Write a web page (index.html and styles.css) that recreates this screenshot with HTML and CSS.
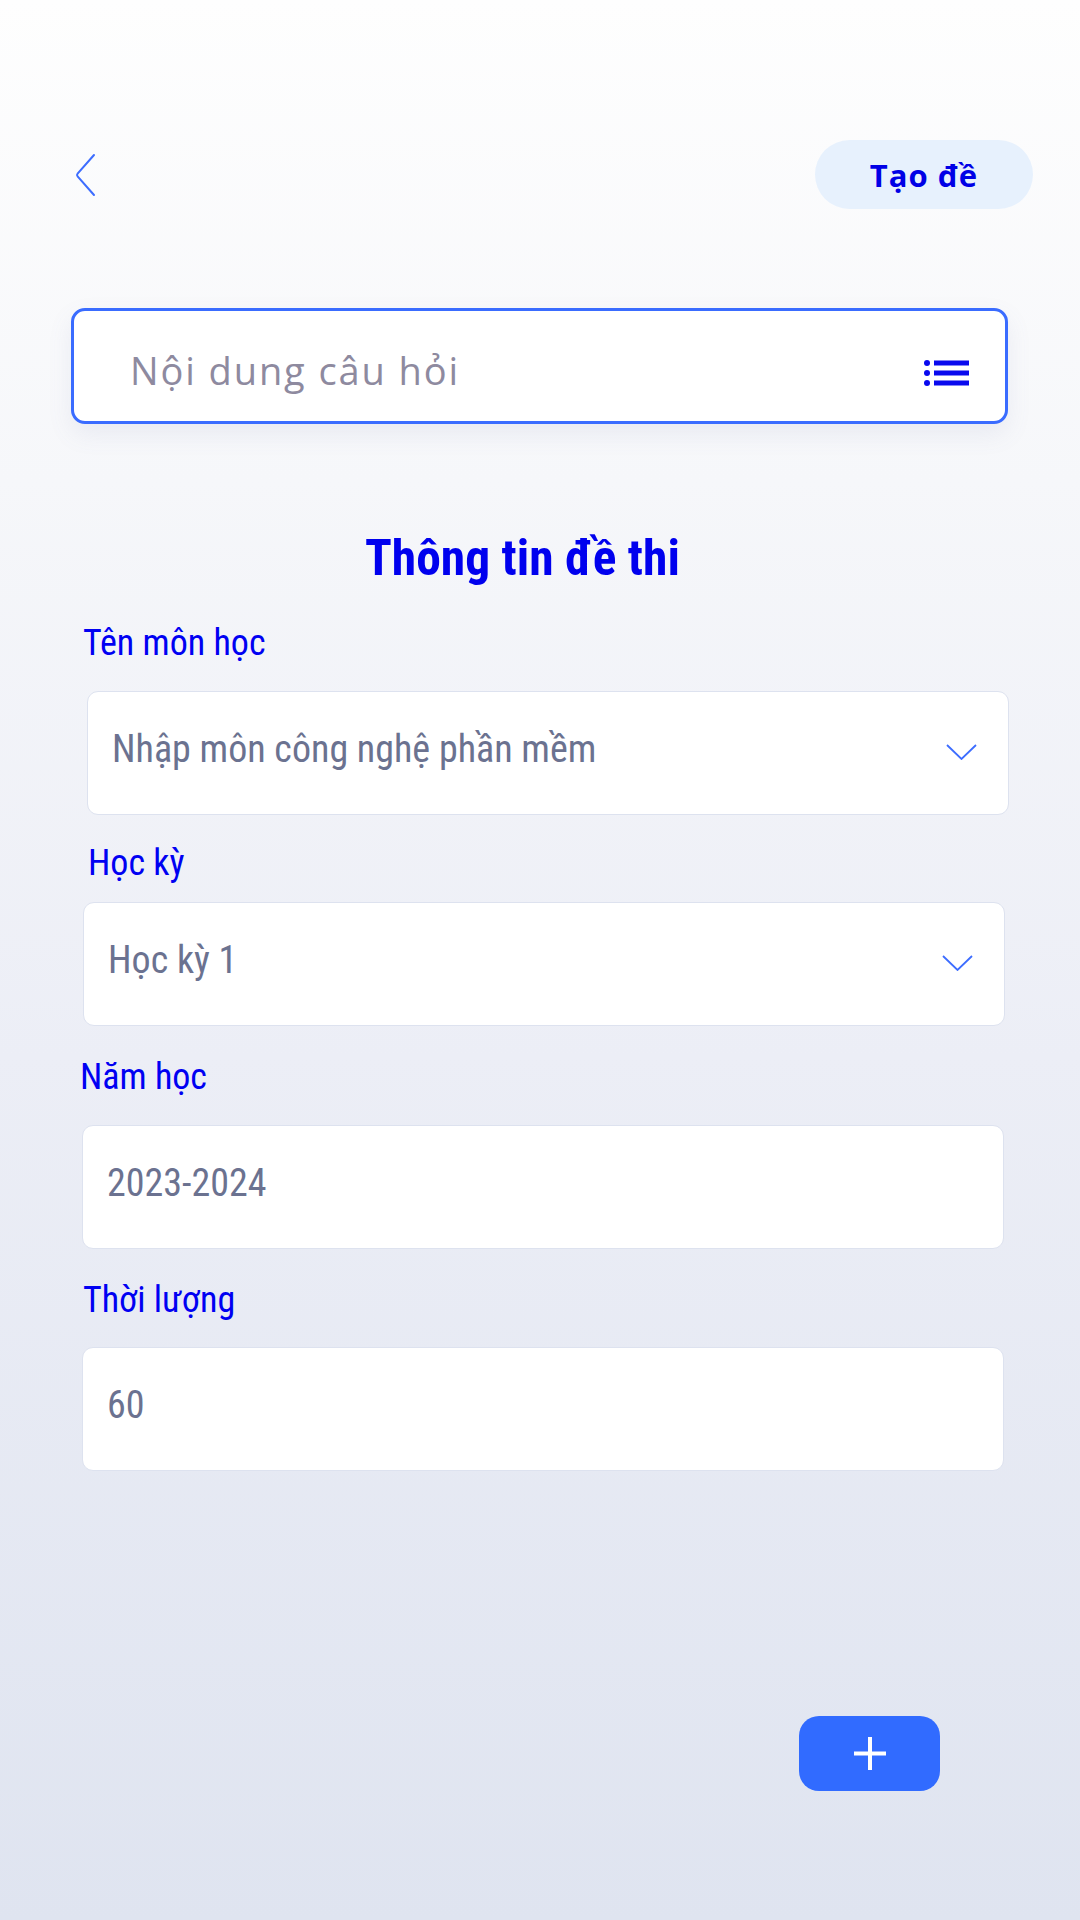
FILE: index.html
```html
<!DOCTYPE html>
<html lang="vi">
<head>
<meta charset="utf-8">
<title>Tạo đề</title>
<link rel="stylesheet" href="styles.css">
</head>
<body>
<div class="page">
  <header class="topbar">
    <button class="back" aria-label="Quay lại">
      <svg width="22" height="44" viewBox="0 0 22 44"><path d="M20 2 L3.6 20.6 Q2.4 22 3.6 23.4 L20 42" fill="none" stroke="#3d6dff" stroke-width="2" stroke-linecap="round" stroke-linejoin="round"/></svg>
    </button>
    <button class="create-btn">Tạo đề</button>
  </header>

  <div class="search">
    <span class="search-placeholder">Nội dung câu hỏi</span>
    <svg class="list-icon" width="46" height="26" viewBox="0 0 46 26">
      <circle cx="3" cy="3" r="3" fill="#0a0aee"/>
      <circle cx="3" cy="13" r="3" fill="#0a0aee"/>
      <circle cx="3" cy="23" r="3" fill="#0a0aee"/>
      <rect x="10" y="0.5" width="35" height="5" fill="#0a0aee"/>
      <rect x="10" y="10.5" width="35" height="5" fill="#0a0aee"/>
      <rect x="10" y="20.5" width="35" height="5" fill="#0a0aee"/>
    </svg>
  </div>

  <h1 class="title">Thông tin đề thi</h1>

  <div class="form">
    <div class="label label-1">Tên môn học</div>
    <div class="field field-1">
      <span class="value">Nhập môn công nghệ phần mềm</span>
      <svg class="caret" width="31" height="16" viewBox="0 0 31 16"><path d="M1 1 L15.5 15 L30 1" fill="none" stroke="#3d6dff" stroke-width="1.8"/></svg>
    </div>

    <div class="label label-2">Học kỳ</div>
    <div class="field field-2">
      <span class="value">Học kỳ 1</span>
      <svg class="caret" width="31" height="16" viewBox="0 0 31 16"><path d="M1 1 L15.5 15 L30 1" fill="none" stroke="#3d6dff" stroke-width="1.8"/></svg>
    </div>

    <div class="label label-3">Năm học</div>
    <div class="field field-3">
      <span class="value">2023-2024</span>
    </div>

    <div class="label label-4">Thời lượng</div>
    <div class="field field-4">
      <span class="value">60</span>
    </div>
  </div>

  <button class="fab" aria-label="Thêm">
    <svg width="32" height="33" viewBox="0 0 32 33"><path d="M16 0 V33 M0 16.5 H32" stroke="#ffffff" stroke-width="4"/></svg>
  </button>
</div>
</body>
</html>
```
FILE: styles.css
```css
html, body {
  margin: 0;
  padding: 0;
}

body {
  width: 1080px;
  min-height: 1920px;
  background: linear-gradient(180deg, #fefefe 0%, #f6f7fa 25%, #eceef6 55%, #dfe4f0 100%);
  font-family: "Roboto Condensed", Roboto, sans-serif;
  font-stretch: condensed;
}

.page {
  padding-top: 140px;
}

button {
  border: 0;
  padding: 0;
  background: none;
  cursor: pointer;
}

.topbar {
  display: flex;
  justify-content: space-between;
  align-items: center;
  height: 69px;
  padding: 0 47px 0 74px;
}

.back {
  display: flex;
  width: 22px;
  height: 44px;
}

.create-btn {
  width: 218px;
  height: 69px;
  border-radius: 35px;
  background: #e7f1fd;
  color: #0000e6;
  font-family: "Open Sans", sans-serif;
  font-stretch: normal;
  font-weight: 700;
  font-size: 31px;
  letter-spacing: 1px;
  display: flex;
  align-items: center;
  justify-content: center;
}

.search {
  box-sizing: border-box;
  margin: 99px 0 0 71px;
  width: 937px;
  height: 116px;
  border: 3px solid #3a6cff;
  border-radius: 14px;
  background: #ffffff;
  box-shadow: 0 10px 24px rgba(110, 120, 170, 0.10);
  display: flex;
  align-items: center;
  justify-content: space-between;
  padding: 8px 35px 0 56px;
}

.search-placeholder {
  font-family: "Open Sans", sans-serif;
  font-stretch: normal;
  font-size: 38px;
  letter-spacing: 1.9px;
  color: #8e8a9f;
}

.list-icon {
  margin-top: 6px;
}

.title {
  margin: 104px 0 0;
  padding-left: 365px;
  font-size: 49.5px;
  line-height: 60px;
  font-weight: 700;
  color: #0000ee;
}

.label {
  font-size: 36px;
  line-height: 44px;
  color: #0000f2;
  margin-left: 83px;
}

.label-1 { margin-top: 33px; }
.label-2 { margin-top: 26px; margin-left: 88px; }
.label-3 { margin-top: 29px; margin-left: 80px; }
.label-4 { margin-top: 29px; }

.field {
  box-sizing: border-box;
  width: 922px;
  height: 124px;
  margin-left: 82px;
  margin-top: 26px;
  background: #ffffff;
  border: 1px solid #dde2ef;
  border-radius: 11px;
  display: flex;
  align-items: center;
  justify-content: space-between;
  padding: 0 31px 8px 24px;
}

.field-1 { margin-left: 87px; }
.field-2 { margin-left: 83px; margin-top: 17px; }
.field-4 { margin-top: 25px; }

.value {
  font-size: 38px;
  color: #6b7290;
}

.caret {
  margin-top: 6px;
}

.fab {
  margin: 245px 0 0 799px;
  width: 141px;
  height: 75px;
  border-radius: 20px;
  background: #316bff;
  display: flex;
  align-items: center;
  justify-content: center;
}
```
